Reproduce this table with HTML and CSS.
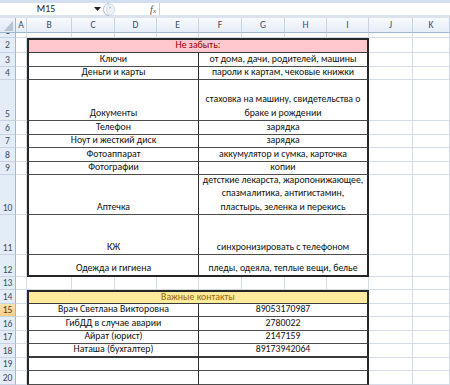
FILE: index.html
```html
<!DOCTYPE html>
<html>
<head>
<meta charset="utf-8">
<link rel="stylesheet" href="styles.css">
</head>
<body>
<div class="app">
  <div class="fbar">
    <div class="namebox">M15</div>
    <div class="dd"><svg width="7" height="4" viewBox="0 0 7 4"><polygon points="0,0 7,0 3.5,4" fill="#222"/></svg></div>
    <div class="grip"><svg width="12" height="13" viewBox="0 0 12 13"><path d="M6 0.5 A5.5 6 0 0 0 6 12.5" fill="none" stroke="#a9b8cc" stroke-width="1"/><ellipse cx="7.5" cy="6.5" rx="4" ry="5.5" fill="#eef2f7" stroke="#c8d3e1" stroke-width="0.8"/><circle cx="7" cy="4.5" r="1" fill="#b7c4d6"/></svg></div>
    <div class="fx"><span>f</span><span class="x">x</span></div>
    <div class="finput"></div>
  </div>
  <div class="sheet">
    <div class="corner"><svg width="16" height="15" viewBox="0 0 16 15"><polygon points="13,3 13,13 4,13" fill="#b4c3d7"/></svg></div>
    <div class="ch">A</div><div class="ch">B</div><div class="ch">C</div><div class="ch">D</div><div class="ch">E</div><div class="ch">F</div><div class="ch">G</div><div class="ch">H</div><div class="ch">I</div><div class="ch">J</div><div class="ch">K</div>

    <div class="rh r1h"><span>1</span></div>
    <div class="c"></div><div class="c"></div><div class="c"></div><div class="c"></div><div class="c"></div><div class="c"></div><div class="c"></div><div class="c"></div><div class="c"></div><div class="c"></div><div class="c"></div>

    <div class="rh">2</div><div class="c"></div>
    <div class="band pink span8">Не забыть:</div>
    <div class="c"></div><div class="c"></div>

    <div class="rh">3</div><div class="c"></div>
    <div class="tl span4">Ключи</div><div class="tr span4">от дома, дачи, родителей, машины</div>
    <div class="c"></div><div class="c"></div>

    <div class="rh">4</div><div class="c"></div>
    <div class="tl span4">Деньги и карты</div><div class="tr span4">пароли к картам, чековые книжки</div>
    <div class="c"></div><div class="c"></div>

    <div class="rh rb">5</div><div class="c"></div>
    <div class="tl span4">Документы</div><div class="tr span4"><p>стаховка на машину, свидетельства о<br>браке и рождении</p></div>
    <div class="c"></div><div class="c"></div>

    <div class="rh">6</div><div class="c"></div>
    <div class="tl span4">Телефон</div><div class="tr span4">зарядка</div>
    <div class="c"></div><div class="c"></div>

    <div class="rh">7</div><div class="c"></div>
    <div class="tl span4">Ноут и жесткий диск</div><div class="tr span4">зарядка</div>
    <div class="c"></div><div class="c"></div>

    <div class="rh">8</div><div class="c"></div>
    <div class="tl span4">Фотоаппарат</div><div class="tr span4">аккумулятор и сумка, карточка</div>
    <div class="c"></div><div class="c"></div>

    <div class="rh">9</div><div class="c"></div>
    <div class="tl span4">Фотографии</div><div class="tr span4">копии</div>
    <div class="c"></div><div class="c"></div>

    <div class="rh rb">10</div><div class="c"></div>
    <div class="tl span4">Аптечка</div><div class="tr span4"><p>детсткие лекарста, жаропонижающее,<br>спазмалитика, антигистамин,<br>пластырь, зеленка и перекись</p></div>
    <div class="c"></div><div class="c"></div>

    <div class="rh rb">11</div><div class="c"></div>
    <div class="tl span4">КЖ</div><div class="tr span4">синхронизировать с телефоном</div>
    <div class="c"></div><div class="c"></div>

    <div class="rh rb">12</div><div class="c"></div>
    <div class="tl span4 last">Одежда и гигиена</div><div class="tr span4 last">пледы, одеяла, теплые вещи, белье</div>
    <div class="c"></div><div class="c"></div>

    <div class="rh">13</div>
    <div class="c"></div><div class="c"></div><div class="c"></div><div class="c"></div><div class="c"></div><div class="c"></div><div class="c"></div><div class="c"></div><div class="c"></div><div class="c"></div><div class="c"></div>

    <div class="rh">14</div><div class="c"></div>
    <div class="band yellow span8">Важные контакты</div>
    <div class="c"></div><div class="c"></div>

    <div class="rh sel">15</div><div class="c"></div>
    <div class="tl span4">Врач Светлана Викторовна</div><div class="tr span4">89053170987</div>
    <div class="c"></div><div class="c"></div>

    <div class="rh">16</div><div class="c"></div>
    <div class="tl span4">ГибДД в случае аварии</div><div class="tr span4">2780022</div>
    <div class="c"></div><div class="c"></div>

    <div class="rh">17</div><div class="c"></div>
    <div class="tl span4">Айрат (юрист)</div><div class="tr span4">2147159</div>
    <div class="c"></div><div class="c"></div>

    <div class="rh">18</div><div class="c"></div>
    <div class="tl span4 thick">Наташа (бухгалтер)</div><div class="tr span4 thick">89173942064</div>
    <div class="c"></div><div class="c"></div>

    <div class="rh">19</div><div class="c"></div>
    <div class="tl span4"></div><div class="tr span4"></div>
    <div class="c"></div><div class="c"></div>

    <div class="rh">20</div><div class="c"></div>
    <div class="tl span4"></div><div class="tr span4"></div>
    <div class="c"></div><div class="c"></div>
  </div>
</div>
</body>
</html>
```
FILE: styles.css
```css
* { box-sizing: border-box; }
html, body { margin: 0; padding: 0; background: #fff; }
body { width: 450px; height: 385px; overflow: hidden; font-family: Carlito, Calibri, "Liberation Sans", sans-serif; font-size: 9.8px; color: #111; }
.app { width: 450px; height: 385px; overflow: hidden; }

.fbar { height: 18px; display: flex; align-items: stretch; border-top: 3px solid #d2dff0; border-bottom: 3px solid #dde3ec; background: #fff; }
.namebox { width: 92px; display: flex; align-items: center; justify-content: center; color: #222; font-size: 9.8px; }
.dd { width: 10px; display: flex; align-items: center; justify-content: center; }
.grip { width: 14px; display: flex; align-items: center; justify-content: center; }
.fx { width: 43px; display: flex; align-items: center; justify-content: flex-end; padding-right: 3px; font-family: "Liberation Serif", serif; font-style: italic; font-size: 10px; color: #555; }
.fx .x { font-size: 7px; margin-top: 3px; }
.finput { flex: 1; border-left: 1px solid #c4cfdd; }

.sheet { display: grid; grid-template-columns: 16px 11px 45px 43px 42px 42px 43px 43px 42px 42px 44px 1fr; grid-template-rows: 15px 5px 15px 14px 13px 41px 14px 13px 14px 13px 40px 40px 22px 13px 14px 13px 14px 13px 14px 13px 14px; }

.corner { background: linear-gradient(#f1f5fb, #e1e9f5); border-right: 1px solid #9eb6ce; border-bottom: 1px solid #9eb6ce; }
.corner svg { display: block; }
.ch { background: linear-gradient(#f8fafd, #e6edf7); border-right: 1px solid #c5d3e4; border-bottom: 1px solid #9eb6ce; display: flex; align-items: center; justify-content: center; color: #3e4c60; font-size: 9.6px; }
.rh { background: #e4ecf7; border-right: 1px solid #9eb6ce; border-bottom: 1px solid #c5d3e4; display: flex; align-items: center; justify-content: center; color: #3e4c60; font-size: 9.6px; overflow: hidden; line-height: 12px; }
.rh.rb { align-items: flex-end; }
.rh.r1h span { display: block; transform: translateY(-4px); }
.rh.sel { background: linear-gradient(#fbe2b2, #f6ce86); color: #4a3a1e; }

.c { border-right: 1px solid #d5dce8; border-bottom: 1px solid #d5dce8; }

.span4 { grid-column: span 4; }
.span8 { grid-column: span 8; }

.tl, .tr, .band { display: flex; align-items: flex-end; justify-content: center; text-align: center; line-height: 13.3px; white-space: nowrap; border-bottom: 1px solid #4d4d4d; }
.tl { border-left: 2px solid #262626; border-right: 1px solid #2e2e2e; }
.tr { border-right: 2px solid #262626; }
.tl.last, .tr.last { border-bottom: 2px solid #262626; }
.tl.thick, .tr.thick { border-bottom: 2px solid #3a3a3a; }
.tl p, .tr p { margin: 0; }

.band { border: 2px solid #262626; border-bottom: 1px solid #3a3a3a; align-items: center; }
.pink { background: #ffc7ce; color: #9c0006; }
.yellow { background: #ffeb9c; color: #9c6500; }
```
